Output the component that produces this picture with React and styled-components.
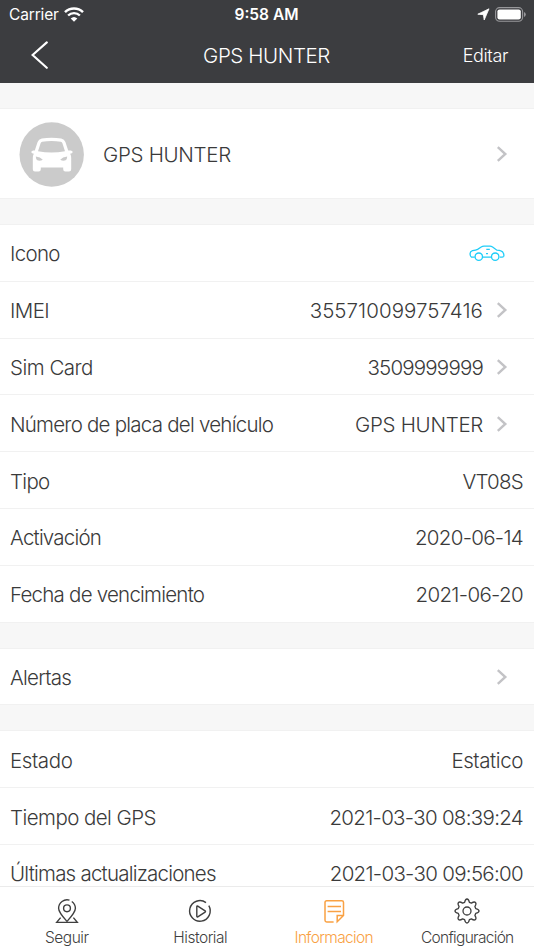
import React from "react";
import styled, { createGlobalStyle } from "styled-components";

const GlobalStyle = createGlobalStyle`
  * {
    box-sizing: border-box;
  }

  body {
    margin: 0;
    background: #f7f7f7;
  }
`;

const Screen = styled.div`
  display: flex;
  flex-direction: column;
  height: 950px;
  overflow: hidden;
  background: #f7f7f7;
  color: #3a3a3a;
  font-family: Inter, "Liberation Sans", sans-serif;
  font-weight: 300;
`;

const TopBar = styled.header`
  flex: none;
  height: 83px;
  background: #3c3d40;
  color: #fff;
`;

const StatusBar = styled.div`
  display: grid;
  grid-template-columns: 1fr auto 1fr;
  align-items: center;
  height: 28px;
  padding: 0 8px 0 9px;
  font-size: 15.5px;
  font-weight: 400;
`;

const StatusGroup = styled.div`
  display: flex;
  align-items: center;
  justify-content: ${(props) => (props.$end ? "flex-end" : "flex-start")};
  gap: 5px;
  letter-spacing: -0.15px;
`;

const Clock = styled.span`
  margin-right: 2px;
  font-weight: 600;
`;

const NavBar = styled.div`
  display: grid;
  grid-template-columns: 1fr auto 1fr;
  align-items: center;
  height: 55px;
  padding: 0 26px 0 30px;
`;

const NavTitle = styled.h1`
  margin: 0 5px 0 0;
  font-size: 20.5px;
  font-weight: 300;
  letter-spacing: -0.4px;
`;

const NavAction = styled.span`
  justify-self: end;
  font-size: 18px;
  letter-spacing: -0.4px;
`;

const Content = styled.main`
  flex: 1;
  min-height: 0;
  overflow: hidden;
`;

const Group = styled.section`
  margin-top: 25px;
  border-top: 1px solid #f1f1f1;
`;

const Row = styled.div`
  display: flex;
  align-items: center;
  height: ${(props) => (props.$tall ? "90px" : "56.8px")};
  padding: ${(props) => (props.$tall ? "2px" : "3px")} 11px 0 10px;
  background: #fff;
  border-bottom: 1px solid #f1f1f1;
`;

const Text = styled.span`
  font-size: 20.5px;
  line-height: 26px;
  white-space: nowrap;
  letter-spacing: ${(props) => props.$track || 0}px;
`;

const Value = styled(Text)`
  margin-left: auto;
`;

const Avatar = styled.svg`
  width: 65px;
  height: 65px;
  margin: 0 19px 1px 9px;
`;

const Arrow = styled.svg`
  flex: none;
  width: 12px;
  height: 18px;
  margin: 0 15px 2px ${(props) => (props.$push ? "auto" : "13px")};
`;

const SmallCar = styled.svg`
  width: 36px;
  height: 17px;
  margin: 0 18px 2px auto;
`;

const TabBar = styled.nav`
  flex: none;
  display: grid;
  grid-template-columns: repeat(4, 1fr);
  height: 64px;
  background: #fff;
  border-top: 1px solid #ebebeb;
`;

const Tab = styled.div`
  display: flex;
  flex-direction: column;
  align-items: center;
  padding-top: 11px;
  color: ${(props) => (props.$active ? "#f9a143" : "#3f3f3f")};
  font-size: 15.5px;

  svg {
    width: 26px;
    height: 26px;
  }
`;

const TabLabel = styled.span`
  margin-top: 4px;
  line-height: 20px;
  letter-spacing: ${(props) => props.$track}px;
`;

const WifiIcon = () => (
  <svg width="20" height="15" viewBox="0 0 20 15" fill="none" stroke="#fff">
    <path d="M1 5.100a12.900 12.900 0 0 1 18 0" strokeWidth="2.500" />
    <path d="M4.100 8.500a8.600 8.600 0 0 1 11.800 0" strokeWidth="2.400" />
    <path d="M10 14.800 6.700 11.500a4.800 4.800 0 0 1 6.600 0z" fill="#fff" stroke="none" />
  </svg>
);

const LocationIcon = () => (
  <svg width="13" height="13" viewBox="0 0 13 13">
    <path
      d="M12 .8 7.200 12 6.400 6.700.8 6.200z"
      fill="#fff"
      stroke="#fff"
      strokeWidth=".8"
      strokeLinejoin="round"
    />
  </svg>
);

const BatteryIcon = () => (
  <svg width="31" height="15" viewBox="0 0 31 15">
    <rect x=".6" y=".6" width="27" height="13.600" rx="4" fill="none" stroke="#98989b" strokeWidth="1.100" />
    <rect x="2.400" y="2.400" width="23.400" height="10" rx="2.200" fill="#fff" />
    <path d="M29 5v5q1.800-.8 1.800-2.500T29 5z" fill="#98989b" />
  </svg>
);

const BackIcon = () => (
  <svg width="19" height="29" viewBox="0 0 19 29" fill="none" stroke="#fff" strokeWidth="2.100">
    <path d="M16.800 1.400 2.600 14 16.800 26.800" strokeLinecap="round" />
  </svg>
);

const Chevron = ({ push }) => (
  <Arrow $push={push} viewBox="0 0 12 18" fill="none" stroke="#c3c3c6" strokeWidth="2.400">
    <path d="M1.800 2.200 9.300 9l-7.500 6.800" />
  </Arrow>
);

const CarAvatar = () => (
  <Avatar viewBox="0 0 65 65">
    <circle cx="32.700" cy="32.500" r="32.200" fill="#cbcbcb" />
    <path
      fill="#fff"
      fillRule="evenodd"
      d="M15.800 28.400 18.600 20q1-3 4.200-3.600 9.700-1.500 19.400 0 3.200.6 4.200 3.600l2.800 8.400h2.600q2.400.4 1.800 2.200-.4 1-2.400 1.200 1 2 1 4.200v11.200q0 2.200-2.200 2.200h-3.600q-2.200 0-2.200-2.200v-1.800H21.800v1.800q0 2.200-2.200 2.200H16q-2.200 0-2.200-2.200V36q0-2.200 1-4.200-2-.2-2.400-1.200-.6-1.800 1.800-2.200zM19 29.200q13.500 2.600 27 0l-2.600-8q-.4-1.200-1.600-1.400-9.300-1.400-18.600 0-1.200.2-1.600 1.400zM16.800 34.600q.2 3.800 2.600 4 2.600.2 4.400-.8-2.400-2.600-7-3.200zM48.200 34.600q-4.600.6-7 3.200 1.800 1 4.400.8 2.400-.2 2.600-4z"
    />
  </Avatar>
);

const CarIcon = () => (
  <SmallCar viewBox="0 0 36 17" fill="none" stroke="#1fcdf8" strokeWidth="1.300">
    <path d="M5.800 12.100H2.400Q1 11.500 1.100 8.400 1.300 6.200 3.500 5.600 7 5 8.600 4.300L12.200 2Q13.500 1.200 15 1.200h6Q22.300 1.200 23.600 2l4.300 3.200q5.300.4 6.300 2.600.9 1.400.6 3.400-.2.900-1.600.9h-2.400M13.800 12.100h8.400" />
    <circle cx="9.800" cy="11.700" r="3.700" />
    <circle cx="26.200" cy="11.700" r="3.700" />
    <path d="M17.300 4.300h3.500M17 8.600h2" />
  </SmallCar>
);

const PinIcon = () => (
  <svg viewBox="0 0 26 26" fill="none" stroke="currentColor" strokeWidth="1.400">
    <path d="M15.500 2.200A8.500 8.500 0 0 0 4.600 10.300c0 4.100 4 8.300 8.400 13.100 4.400-4.800 8.400-9 8.400-13.100a8.500 8.500 0 0 0-3.600-6.800" />
    <circle cx="13" cy="10.300" r="3.400" />
    <path d="M6.600 19.600 2.700 24.400H23.300l-3.900-4.800" />
  </svg>
);

const PlayIcon = () => (
  <svg viewBox="0 0 26 26" fill="none" stroke="currentColor" strokeWidth="1.400">
    <path d="M19 4.600A10.300 10.300 0 1 0 21.800 7.700" />
    <path d="M9.800 8.500v9.800q.1 1 1 .5l7.300-4.700q.8-.6 0-1.200l-7.300-4.800q-.9-.5-1 .4z" />
  </svg>
);

const NoteIcon = () => (
  <svg viewBox="0 0 26 26" fill="none" stroke="currentColor" strokeWidth="1.500">
    <path d="M12.600 24H5.700Q4 24 4 22.300V4.500Q4 2.800 5.700 2.800h15.100q1.700 0 1.700 1.700v13l-6.300 6.300v-6.300h6.300M6.600 8.600h13.400M6.600 13.400h13.400" />
  </svg>
);

const GearIcon = () => (
  <svg viewBox="0 0 26 26" fill="none" stroke="currentColor" strokeWidth="1.300" strokeLinejoin="round">
    <path d="M10.600 4.300Q11.300 1 13 1t2.400 3.300l2 .8q2.900-1.800 4.100-.6t-.6 4.100l.8 2Q25 11.300 25 13t-3.300 2.400l-.8 2q1.800 2.900.6 4.100t-4.100-.6l-2 .8Q14.700 25 13 25t-2.400-3.300l-2-.8q-2.900 1.800-4.100.6t.6-4.100l-.8-2Q1 14.700 1 13t3.300-2.400l.8-2Q3.300 5.700 4.500 4.500t4.100.6z" />
    <circle cx="13" cy="13" r="4" />
  </svg>
);

const details = [
  { label: "Icono", labelTrack: -0.7, icon: true },
  { label: "IMEI", labelTrack: -0.6, value: "355710099757416", valueTrack: 0.05, arrow: true },
  { label: "Sim Card", labelTrack: -0.5, value: "3509999999", valueTrack: -0.8, arrow: true },
  { label: "Número de placa del vehículo", labelTrack: -0.76, value: "GPS HUNTER", valueTrack: -0.3, arrow: true },
  { label: "Tipo", labelTrack: -0.7, value: "VT08S", valueTrack: -0.75 },
  { label: "Activación", labelTrack: -0.8, value: "2020-06-14", valueTrack: -0.7 },
  { label: "Fecha de vencimiento", labelTrack: -0.77, value: "2021-06-20", valueTrack: -0.65 },
];

const alerts = [{ label: "Alertas", labelTrack: -0.75, arrow: true }];

const state = [
  { label: "Estado", labelTrack: -0.4, value: "Estatico", valueTrack: -0.4 },
  { label: "Tiempo del GPS", labelTrack: -0.55, value: "2021-03-30 08:39:24", valueTrack: -0.7 },
  { label: "Últimas actualizaciones", labelTrack: -0.78, value: "2021-03-30 09:56:00", valueTrack: -0.7 },
];

const tabs = [
  { label: "Seguir", track: -0.5, Icon: PinIcon },
  { label: "Historial", track: -0.5, Icon: PlayIcon },
  { label: "Informacion", track: -0.65, Icon: NoteIcon, active: true },
  { label: "Configuración", track: -0.7, Icon: GearIcon },
];

function InfoGroup({ rows }) {
  return (
    <Group>
      {rows.map((row) => (
        <Row key={row.label}>
          <Text $track={row.labelTrack}>{row.label}</Text>
          {row.value && <Value $track={row.valueTrack}>{row.value}</Value>}
          {row.icon && <CarIcon />}
          {row.arrow && <Chevron push={!row.value} />}
        </Row>
      ))}
    </Group>
  );
}

export default function App() {
  return (
    <>
      <GlobalStyle />
      <Screen>
        <TopBar>
          <StatusBar>
            <StatusGroup>
              <span>Carrier</span>
              <WifiIcon />
            </StatusGroup>
            <Clock>9:58 AM</Clock>
            <StatusGroup $end>
              <LocationIcon />
              <BatteryIcon />
            </StatusGroup>
          </StatusBar>
          <NavBar>
            <BackIcon />
            <NavTitle>GPS HUNTER</NavTitle>
            <NavAction>Editar</NavAction>
          </NavBar>
        </TopBar>
        <Content>
          <Group>
            <Row $tall>
              <CarAvatar />
              <Text $track={-0.3}>GPS HUNTER</Text>
              <Chevron push />
            </Row>
          </Group>
          <InfoGroup rows={details} />
          <InfoGroup rows={alerts} />
          <InfoGroup rows={state} />
        </Content>
        <TabBar>
          {tabs.map(({ label, track, Icon, active }) => (
            <Tab key={label} $active={active}>
              <Icon />
              <TabLabel $track={track}>{label}</TabLabel>
            </Tab>
          ))}
        </TabBar>
      </Screen>
    </>
  );
}
